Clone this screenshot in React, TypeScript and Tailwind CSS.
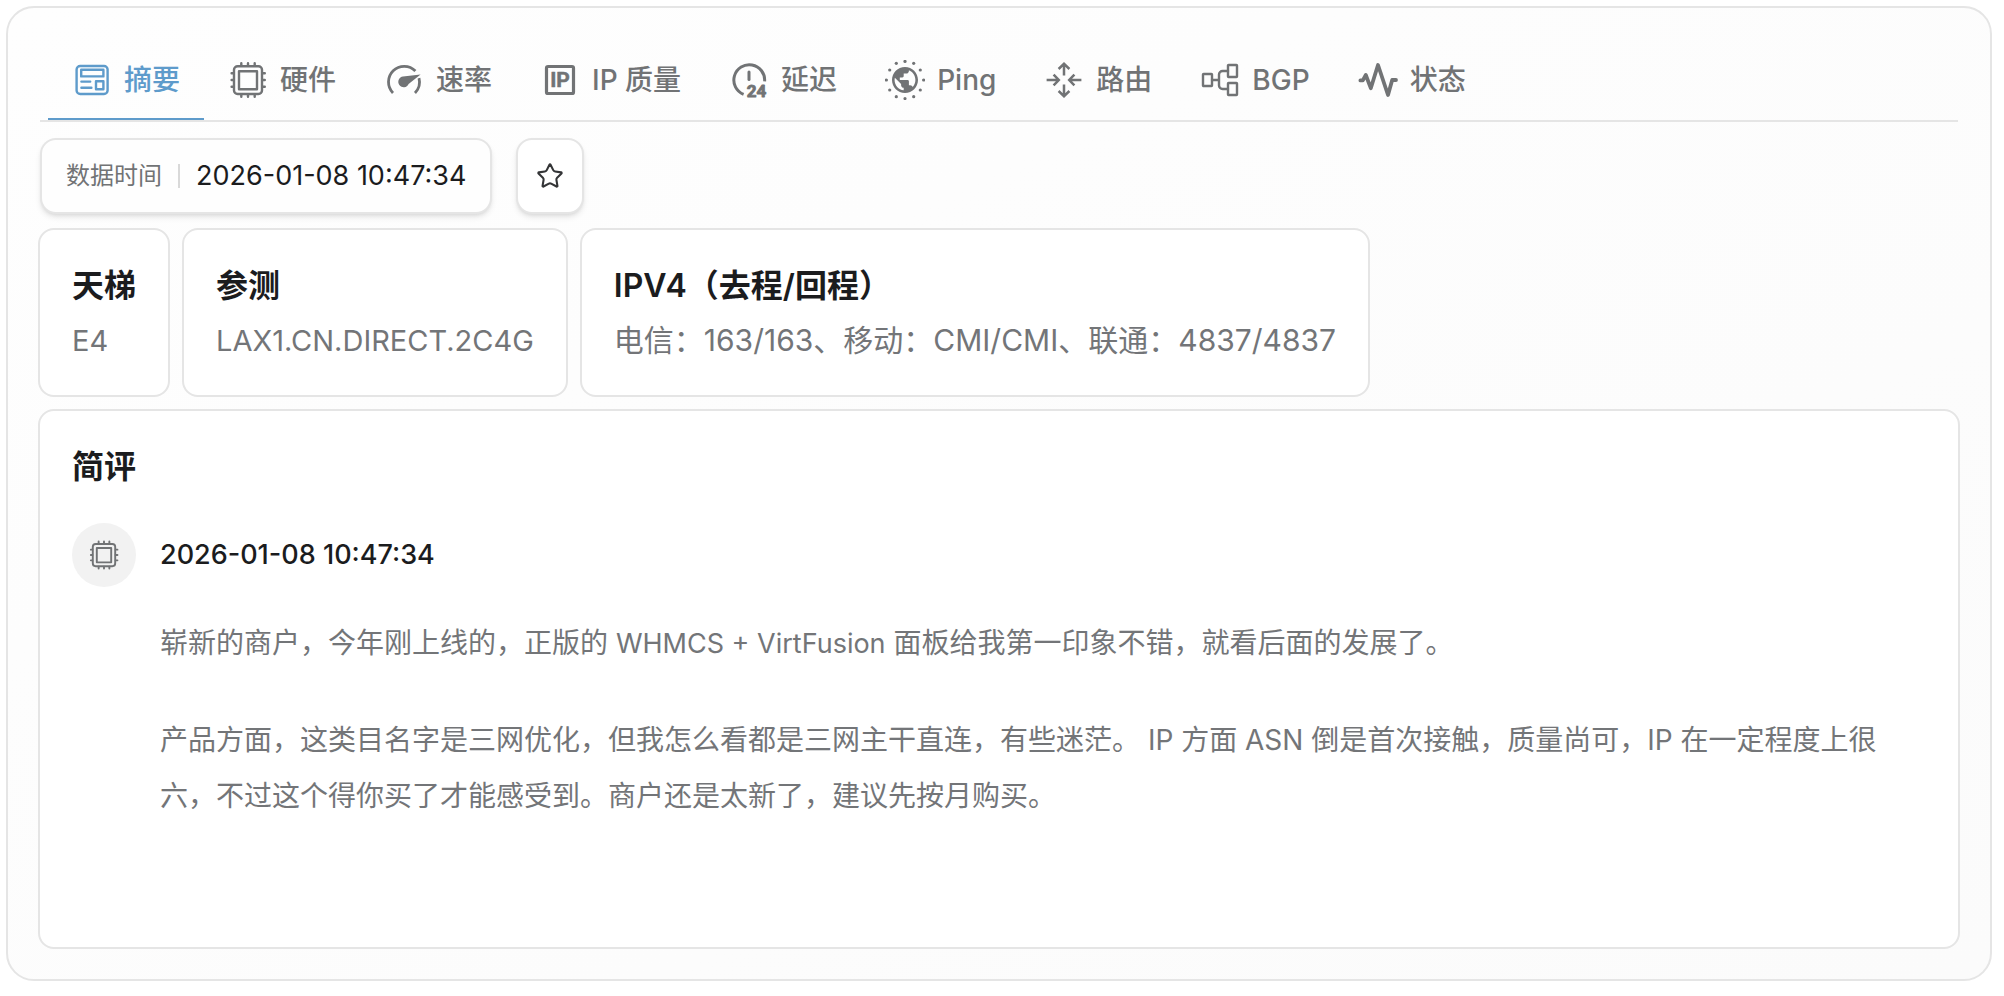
import { useState } from 'react';
import type { ReactNode } from 'react';
import { Star } from 'lucide-react';

function Icon({ children, className = 'size-10' }: { children: ReactNode; className?: string }) {
  return (
    <svg
      viewBox="0 0 40 40"
      className={className}
      fill="none"
      stroke="currentColor"
      strokeWidth="2.4"
      strokeLinecap="round"
      strokeLinejoin="round"
      aria-hidden="true"
    >
      {children}
    </svg>
  );
}

function SummaryIcon() {
  return (
    <Icon>
      <rect x="4.6" y="6" width="31" height="28" rx="3.6" />
      <rect x="9.2" y="9.8" width="22.2" height="6.6" />
      <rect x="24" y="21.2" width="7.4" height="8" />
      <path d="M9.4 21.6h8.8M9.4 27.8h10" />
    </Icon>
  );
}

function ChipIcon({ className }: { className?: string }) {
  return (
    <Icon className={className}>
      <rect x="6" y="6.2" width="28" height="27.8" rx="3.6" />
      <rect x="11" y="11.2" width="18" height="18" />
      <path d="M13.3 5.6V3.2M20 5.6V3.2M26.7 5.6V3.2M13.3 34.6v2.2M20 34.6v2.2M26.7 34.6v2.2M5.4 13.3H3.6M5.4 20H3.6M5.4 26.7H3.6M34.6 13.3h2.2M34.6 20h2.2M34.6 26.7h2.2" />
    </Icon>
  );
}

function GaugeIcon() {
  return (
    <Icon>
      <path
        d="M9 33A15.6 15.6 0 0 1 31.4 11M35 18.2A15.6 15.6 0 0 1 31 33"
        strokeWidth="2.8"
        strokeLinecap="butt"
      />
      <path d="M36.6 14.4 24.6 24A5.4 5.4 0 1 1 19 16.4Z" fill="currentColor" stroke="none" />
    </Icon>
  );
}

function IpIcon() {
  return (
    <Icon>
      <rect x="6.5" y="6.5" width="27" height="27" rx="1.6" strokeWidth="3.2" />
      <text
        x="20"
        y="27.4"
        textAnchor="middle"
        fill="currentColor"
        stroke="currentColor"
        strokeWidth="0.5"
        className="font-[Roboto,sans-serif] text-[21px] font-bold"
      >
        IP
      </text>
    </Icon>
  );
}

function LatencyIcon() {
  return (
    <Icon>
      <path d="M35.6 21.4A15.4 15.4 0 1 0 14.6 34.4" strokeWidth="3" strokeLinecap="butt" />
      <path d="M20 12v7.6" strokeWidth="3" />
      <text
        x="27.6"
        y="36.6"
        textAnchor="middle"
        fill="currentColor"
        stroke="currentColor"
        strokeWidth="0.9"
        className="font-[Roboto,sans-serif] text-[17px] font-bold"
      >
        24
      </text>
    </Icon>
  );
}

const GLOBE_DOTS: [number, number][] = [
  [20, 1.4], [28.7, 3.3], [35.3, 10], [38.6, 20], [35.3, 30], [28.7, 36.7],
  [20, 38.6], [11.3, 36.7], [4.7, 30], [1.4, 20], [4.7, 10], [11.3, 3.3],
];

function GlobeIcon() {
  return (
    <Icon>
      <g fill="currentColor" stroke="none">
        {GLOBE_DOTS.map(([x, y]) => (
          <circle key={`${x}-${y}`} cx={x} cy={y} r="1.6" />
        ))}
        <path
          transform="translate(4.4 4.4) scale(1.3)"
          d="M12 2C6.48 2 2 6.48 2 12s4.48 10 10 10 10-4.48 10-10S17.52 2 12 2zm-1 17.93c-3.95-.49-7-3.85-7-7.93 0-.62.08-1.21.21-1.79L9 15v1c0 1.1.9 2 2 2v1.93zm6.9-2.54c-.26-.81-1-1.39-1.9-1.39h-1v-3c0-.55-.45-1-1-1H8v-2h2c.55 0 1-.45 1-1V7h2c1.1 0 2-.9 2-2v-.41c2.93 1.19 5 4.06 5 7.41 0 2.08-.8 3.97-2.1 5.39z"
        />
      </g>
    </Icon>
  );
}

function RouteIcon() {
  return (
    <Icon>
      <path
        d="M20 15.4V4M14.6 9 20 3.8 25.4 9M20 24.6V36M14.6 31 20 36.2l5.4-5.2M2.6 20h12M9.6 14.6 14.8 20l-5.2 5.4M37.4 20h-12M30.4 14.6 25.2 20l5.2 5.4"
        strokeWidth="2.5"
        strokeLinecap="butt"
        strokeLinejoin="miter"
      />
    </Icon>
  );
}

function TopologyIcon() {
  return (
    <Icon>
      <rect x="3" y="14" width="9" height="12" rx="0.6" />
      <rect x="28" y="5" width="9" height="12" rx="0.6" />
      <rect x="28" y="23" width="9" height="12" rx="0.6" />
      <path d="M12 20h7M28 11h-5.4a3.6 3.6 0 0 0-3.6 3.6v10.8a3.6 3.6 0 0 0 3.6 3.6H28" />
    </Icon>
  );
}

function PulseIcon() {
  return (
    <Icon>
      <path d="M2.4 20.4h2.4L7.8 15l5 13.2L20 5l10 30 4.2-15h3.8" strokeWidth="3.8" />
    </Icon>
  );
}

const TABS: { id: string; label: string; icon: ReactNode }[] = [
  { id: 'summary', label: '摘要', icon: <SummaryIcon /> },
  { id: 'hardware', label: '硬件', icon: <ChipIcon /> },
  { id: 'speed', label: '速率', icon: <GaugeIcon /> },
  { id: 'ip', label: 'IP 质量', icon: <IpIcon /> },
  { id: 'latency', label: '延迟', icon: <LatencyIcon /> },
  { id: 'ping', label: 'Ping', icon: <GlobeIcon /> },
  { id: 'route', label: '路由', icon: <RouteIcon /> },
  { id: 'bgp', label: 'BGP', icon: <TopologyIcon /> },
  { id: 'status', label: '状态', icon: <PulseIcon /> },
];

function InfoCard({ title, children }: { title: string; children: ReactNode }) {
  return (
    <section className="flex flex-col gap-2 rounded-2xl border-2 border-[#e5e5e5] bg-white p-8">
      <h2 className="text-[32px] leading-[48px] font-semibold text-[#1b1c1e]">{title}</h2>
      <p className="text-[30px] leading-[44px] text-[#737578]">{children}</p>
    </section>
  );
}

export default function App() {
  const [active, setActive] = useState('summary');
  const [starred, setStarred] = useState(false);

  return (
    <div className="bg-white pt-[6px] pr-3 pb-4 pl-[6px] font-[Inter,'Noto_Sans_CJK_SC',sans-serif] text-[#1b1c1e]">
      <main className="rounded-[28px] border-2 border-[#e5e5e5] bg-linear-to-br from-[#fefefe] to-[#fbfbfb] px-[30px] pt-8 pb-[30px]">
        <nav role="tablist" className="mx-[2px] flex border-b-2 border-[#e5e5e5] pl-2">
          {TABS.map((tab) => (
            <button
              key={tab.id}
              type="button"
              role="tab"
              aria-selected={active === tab.id}
              onClick={() => setActive(tab.id)}
              className={
                active === tab.id
                  ? 'flex h-20 items-center gap-3 border-y-2 border-t-transparent border-b-[#5e9bcb] px-6 text-[28px] font-medium whitespace-nowrap text-[#5e9bcb]'
                  : 'flex h-20 items-center gap-3 border-y-2 border-transparent px-6 text-[28px] font-medium whitespace-nowrap text-[#717375]'
              }
            >
              {tab.icon}
              <span>{tab.label}</span>
            </button>
          ))}
        </nav>

        <div className="mx-[2px] mt-4 flex gap-6">
          <div className="flex h-[76px] items-center rounded-2xl border-2 border-[#e5e5e5] bg-[#fefefe] px-6 shadow-md">
            <span className="text-2xl text-[#717375]">数据时间</span>
            <span className="mx-4 h-6 w-[2px] bg-[#d9d9d9]" />
            <time dateTime="2026-01-08T10:47:34" className="text-[27px]">
              2026-01-08 10:47:34
            </time>
          </div>
          <button
            type="button"
            aria-label="收藏"
            aria-pressed={starred}
            onClick={() => setStarred(!starred)}
            className="flex h-[76px] w-[68px] items-center justify-center rounded-2xl border-2 border-[#e5e5e5] bg-white text-[#333436] shadow-md"
          >
            <Star size={28} strokeWidth={1.8} fill={starred ? 'currentColor' : 'none'} />
          </button>
        </div>

        <div className="mt-[14px] flex flex-wrap gap-3">
          <InfoCard title="天梯">
            <span className="text-[29px]">E4</span>
          </InfoCard>
          <InfoCard title="参测">
            <span className="text-[29px]">LAX1.CN.DIRECT.2C4G</span>
          </InfoCard>
          <InfoCard title="IPV4（去程/回程）">电信：163/163、移动：CMI/CMI、联通：4837/4837</InfoCard>
        </div>

        <section className="mt-3 rounded-2xl border-2 border-[#e5e5e5] bg-white px-8 pt-8 pb-[123px]">
          <h2 className="text-[32px] leading-[48px] font-semibold">简评</h2>
          <article className="mt-8">
            <header className="flex items-center gap-6">
              <span className="flex size-16 items-center justify-center rounded-full bg-[#f2f2f2] text-[#717375]">
                <ChipIcon className="size-8" />
              </span>
              <time dateTime="2026-01-08T10:47:34" className="text-[27px] font-medium">
                2026-01-08 10:47:34
              </time>
            </header>
            <div className="mt-7 flex flex-col gap-10 pr-4 pl-[88px] text-[28px] leading-[56px] text-[#737578]">
              <p>
                崭新的商户，今年刚上线的，正版的 <span className="text-[27px]">WHMCS + VirtFusion</span>{' '}
                面板给我第一印象不错，就看后面的发展了。
              </p>
              <p>
                产品方面，这类目名字是三网优化，但我怎么看都是三网主干直连，有些迷茫。 IP 方面 ASN
                倒是首次接触，质量尚可，IP 在一定程度上很六，不过这个得你买了才能感受到。商户还是太新了，建议先按月购买。
              </p>
            </div>
          </article>
        </section>
      </main>
    </div>
  );
}
